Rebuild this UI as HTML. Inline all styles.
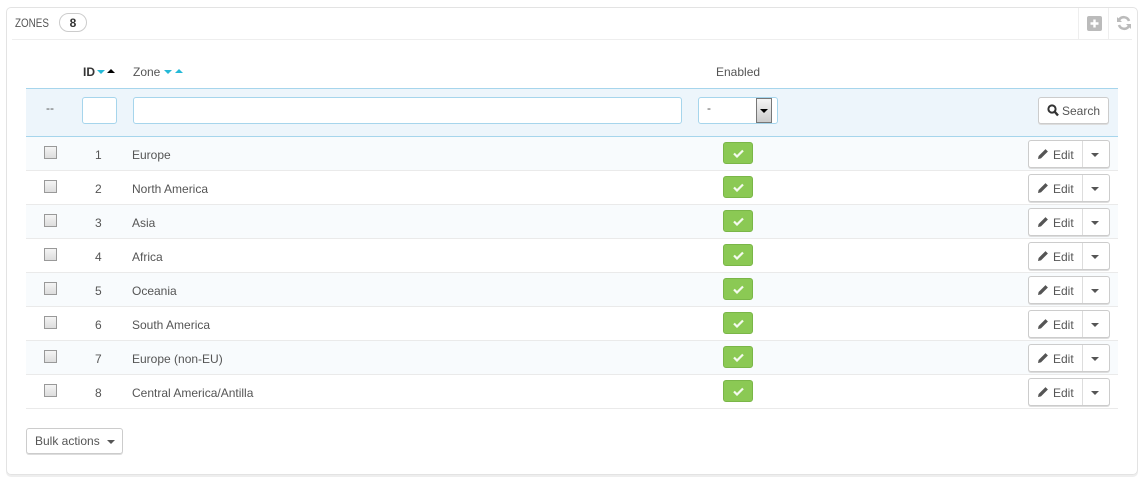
<!DOCTYPE html>
<html><head><meta charset="utf-8"><style>
body{margin:0;background:#fff;font-family:"Liberation Sans",sans-serif;font-size:12px;color:#555;width:1144px;height:482px;position:relative;overflow:hidden}
.a{position:absolute}
.panel{left:6px;top:7px;width:1130px;height:466px;border:1px solid #e3e3e3;border-radius:5px;box-shadow:0 2px 0 #eee}
.row{left:26px;width:1092px;height:33px;border-bottom:1px solid #eaeaea}
.cb{width:11px;height:11px;border:1px solid #999;background:linear-gradient(#f4f4f4,#ddd)}
.ok{width:30px;height:22px;background:#8bc954;border:1px solid #7ab648;border-radius:3px;box-sizing:border-box}
.edit{width:82px;height:28px;border:1px solid #ccc;border-radius:3px;background:#fff;box-sizing:border-box;box-shadow:0 1px 0 #ddd}
.edit span{position:absolute;top:7px;color:#555;font-size:12px}
.sep{position:absolute;left:53px;top:0;width:1px;height:26px;background:#ddd}
.car{position:absolute;width:0;height:0;border-left:4px solid transparent;border-right:4px solid transparent;border-top:4px solid #555}
</style></head><body>
<div class="a panel"></div>
<div class="a" style="left:15px;top:16px;font-size:12px;color:#555;transform:scaleX(0.82);transform-origin:left">ZONES</div>
<div class="a" style="left:59px;top:13px;width:28px;height:19px;border:1px solid #ccc;border-radius:10px;text-align:center;line-height:18px;font-weight:bold;color:#333;box-sizing:border-box">8</div>
<div class="a" style="left:12px;top:39px;width:1120px;height:1px;background:#eee"></div>
<div class="a" style="left:1078px;top:8px;width:1px;height:31px;background:#eee"></div>
<div class="a" style="left:1108px;top:8px;width:1px;height:31px;background:#eee"></div>
<svg class="a" style="left:1087px;top:16px" width="15" height="15" viewBox="0 0 15 15"><rect width="15" height="15" rx="2" fill="#bbb"/><path d="M7.5 3.5v8M3.5 7.5h8" stroke="#fff" stroke-width="2.4"/></svg>
<svg class="a" style="left:1116px;top:15px" width="16" height="16" viewBox="0 0 16 16"><path d="M13 6A5.5 5.5 0 0 0 3 5" stroke="#bbb" stroke-width="2.6" fill="none"/><path d="M3 10A5.5 5.5 0 0 0 13 11" stroke="#bbb" stroke-width="2.6" fill="none"/><path d="M1 2v5h5z" fill="#bbb"/><path d="M15 14v-5h-5z" fill="#bbb"/></svg>

<div class="a" style="left:83px;top:65px;font-weight:bold;color:#333">ID</div>
<div class="a car" style="left:97px;top:70px;border-top-color:#25b9d7"></div>
<div class="a car" style="left:107px;top:69px;border-top:none;border-bottom:4px solid #000"></div>
<div class="a" style="left:133px;top:65px;color:#555">Zone</div>
<div class="a car" style="left:164px;top:70px;border-top-color:#25b9d7"></div>
<div class="a car" style="left:175px;top:69px;border-top:none;border-bottom:4px solid #25b9d7"></div>
<div class="a" style="left:716px;top:65px;color:#555">Enabled</div>

<div class="a" style="left:26px;top:88px;width:1092px;height:47px;background:#edf5fb;border-top:1px solid #a6d5ec;border-bottom:1px solid #a6d5ec"></div>
<div class="a" style="left:46px;top:101px;color:#555">--</div>
<div class="a" style="left:82px;top:97px;width:35px;height:27px;background:#fff;border:1px solid #a6d5ec;border-radius:3px;box-sizing:border-box"></div>
<div class="a" style="left:133px;top:97px;width:549px;height:27px;background:#fff;border:1px solid #a6d5ec;border-radius:3px;box-sizing:border-box"></div>
<div class="a" style="left:698px;top:97px;width:80px;height:27px;background:#fff;border:1px solid #a6d5ec;border-radius:3px;box-sizing:border-box"></div>
<div class="a" style="left:707px;top:101px">-</div>
<div class="a" style="left:756px;top:98px;width:16px;height:25px;border:1px solid #777;background:linear-gradient(#f4f4f4,#ccc);box-sizing:border-box"></div>
<div class="a car" style="left:760px;top:109px;border-top-color:#000"></div>
<div class="a" style="left:1038px;top:97px;width:71px;height:27px;background:#fff;border:1px solid #ccc;border-radius:3px;box-sizing:border-box;box-shadow:0 1px 0 #ddd"></div>
<svg class="a" style="left:1047px;top:104px" width="12" height="13" viewBox="0 0 12 13"><circle cx="5" cy="5" r="3.6" stroke="#333" stroke-width="2" fill="none"/><path d="M7.5 7.5l3.5 4" stroke="#333" stroke-width="2.4"/></svg>
<div class="a" style="left:1062px;top:104px;color:#555">Search</div>

<div class="a row" style="top:137px;background:#f8fbfd"></div>
<div class="a row" style="top:171px"></div>
<div class="a row" style="top:205px;background:#f8fbfd"></div>
<div class="a row" style="top:239px"></div>
<div class="a row" style="top:273px;background:#f8fbfd"></div>
<div class="a row" style="top:307px"></div>
<div class="a row" style="top:341px;background:#f8fbfd"></div>
<div class="a row" style="top:375px"></div>

<div id="rows"></div>
<script>
var n=["Europe","North America","Asia","Africa","Oceania","South America","Europe (non-EU)","Central America/Antilla"],h="";
var pen='<svg style="position:absolute;left:8px;top:7px" width="12" height="12" viewBox="0 0 12 12"><path d="M1 11l.6-3L8.5 1.1l2.4 2.4L4 10.4z" fill="#555"/></svg>';
var chk='<svg style="position:absolute;left:9px;top:6px" width="11" height="9" viewBox="0 0 11 9"><path d="M1 4.5l3 3 6-6" stroke="#fff" stroke-width="2.2" fill="none" opacity="0.9"/></svg>';
for(var i=0;i<8;i++){var t=137+i*34;
h+='<div class="a cb" style="left:44px;top:'+(t+9)+'px"></div>'+
'<div class="a" style="left:95px;top:'+(t+11)+'px">'+(i+1)+'</div>'+
'<div class="a" style="left:132px;top:'+(t+11)+'px">'+n[i]+'</div>'+
'<div class="a ok" style="left:723px;top:'+(t+5)+'px">'+chk+'</div>'+
'<div class="a edit" style="left:1028px;top:'+(t+3)+'px">'+pen+'<span style="left:24px">Edit</span><div class="sep"></div><div class="car" style="left:62px;top:12px"></div></div>';}
document.getElementById("rows").innerHTML=h;
</script>

<div class="a" style="left:26px;top:428px;width:97px;height:26px;border:1px solid #ccc;border-radius:3px;box-sizing:border-box;box-shadow:0 1px 0 #ddd"></div>
<div class="a" style="left:35px;top:434px;color:#555">Bulk actions</div>
<div class="a car" style="left:107px;top:440px"></div>
</body></html>
